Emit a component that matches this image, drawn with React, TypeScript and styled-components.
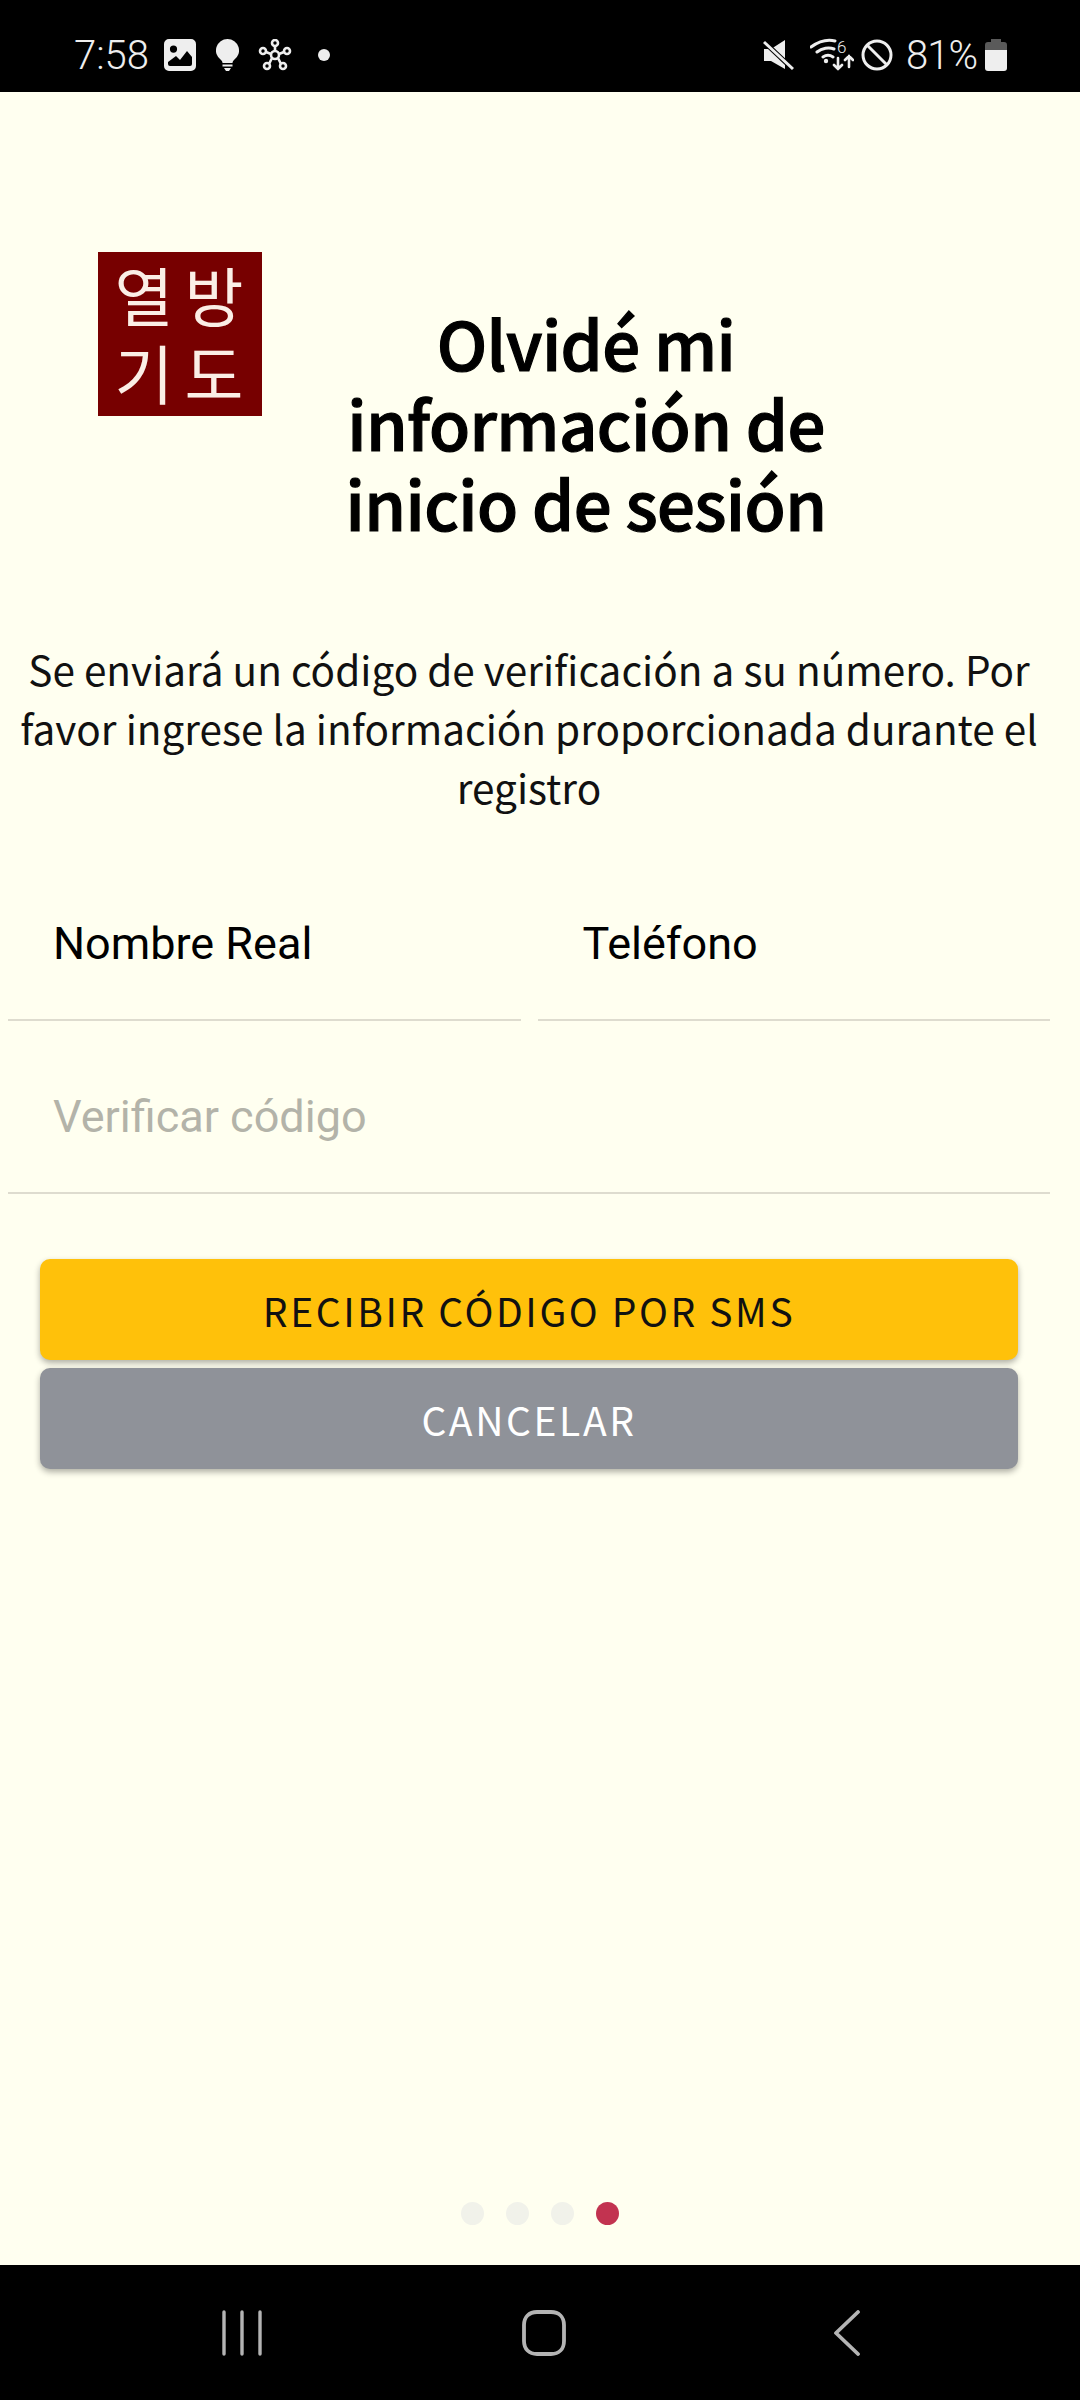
import React from "react";
import styled, { createGlobalStyle } from "styled-components";

const Global = createGlobalStyle`
  html, body {
    margin: 0;
    padding: 0;
    background: #fffff0;
  }
  * {
    box-sizing: border-box;
  }
`;

const CJK = `"Noto Sans CJK KR", "Noto Sans", sans-serif`;

const Root = styled.div`
  width: 1080px;
  height: 2400px;
  display: flex;
  flex-direction: column;
  background: #fffff0;
`;

const StatusBar = styled.div`
  height: 92px;
  flex: none;
  background: #000;
  color: #eee;
  padding: 18px 73px 0 74px;
  display: flex;
  align-items: center;
  justify-content: space-between;
  font-family: Roboto, sans-serif;
  font-weight: 300;
  font-size: 40px;
`;

const StatusGroup = styled.div`
  display: flex;
  align-items: center;
`;

const Time = styled.span`
  margin-right: 15px;
`;

const Percent = styled.span`
  margin: 0 8px 0 13px;
  letter-spacing: -1px;
`;

const Main = styled.main`
  flex: 1;
  display: flex;
  flex-direction: column;
  min-height: 0;
`;

const Header = styled.div`
  display: flex;
  align-items: flex-start;
  padding: 160px 0 0 98px;
  height: 547px;
`;

const Logo = styled.div`
  width: 164px;
  height: 164px;
  flex: none;
  background: #770000;
  color: #fbeee6;
  display: grid;
  grid-template-columns: 70px 70px;
  grid-auto-rows: 78px;
  align-items: center;
  justify-items: center;
  padding: 2px 13px 6px 11px;
  font-family: "Noto Sans CJK KR", serif;
  font-size: 64px;
`;

const LogoChar = styled.span`
  display: block;
  line-height: 78px;
  height: 78px;
`;

const Title = styled.h1`
  margin: 0 0 0 44px;
  width: 560px;
  padding-top: 50px;
  text-align: center;
  font-family: ${CJK};
  font-weight: 500;
  font-size: 67px;
  line-height: 80px;
  letter-spacing: -0.6px;
  -webkit-text-stroke: 1.2px #000;
  color: #000;
`;

const Intro = styled.p`
  margin: 0;
  padding: 0 22px 0 0;
  height: 209px;
  text-align: center;
  font-family: ${CJK};
  font-size: 40.5px;
  line-height: 59px;
  color: #111;
`;

const FieldRow = styled.div`
  display: flex;
  gap: 17px;
  padding: 0 30px 0 8px;
`;

const Field = styled.div`
  flex: 1;
  height: 173px;
  display: flex;
  align-items: center;
  padding: 20px 45px 0;
  border-bottom: 2px solid #dedccf;
  font-family: Roboto, sans-serif;
  font-size: 45px;
`;

const FieldInput = styled.div<{ $placeholder?: boolean }>`
  color: ${(p) => (p.$placeholder ? "#b3b3a9" : "#000")};
`;

const Actions = styled.div`
  display: flex;
  flex-direction: column;
  gap: 8px;
  padding: 65px 62px 0 40px;
`;

const ActionButton = styled.div<{ $bg: string; $fg: string }>`
  height: 101px;
  border-radius: 10px;
  background: ${(p) => p.$bg};
  color: ${(p) => p.$fg};
  display: flex;
  align-items: center;
  justify-content: center;
  font-family: ${CJK};
  font-size: 39px;
  letter-spacing: 2.6px;
  box-shadow: 0 3px 6px rgba(0, 0, 0, 0.32);
`;

const Pager = styled.div`
  margin-top: auto;
  display: flex;
  justify-content: center;
  gap: 22px;
  padding-bottom: 40px;
`;

const Dot = styled.div<{ $active?: boolean }>`
  width: 23px;
  height: 23px;
  border-radius: 50%;
  background: ${(p) => (p.$active ? "#c23350" : "#f1f2ea")};
`;

const NavBar = styled.div`
  height: 135px;
  flex: none;
  background: #000;
  display: flex;
  align-items: center;
  justify-content: space-between;
  padding: 0 219px 0 222px;
`;

const Icon = styled.svg<{ $left?: number; $right?: number }>`
  display: block;
  flex: none;
  margin-left: ${(p) => p.$left ?? 0}px;
  margin-right: ${(p) => p.$right ?? 0}px;
`;

const ImageIcon = () => (
  <Icon width="32" height="32" viewBox="0 0 32 32">
    <path
      fill="#eee"
      fillRule="evenodd"
      d="M5 0h22a5 5 0 0 1 5 5v22a5 5 0 0 1-5 5H5a5 5 0 0 1-5-5V5a5 5 0 0 1 5-5zM9.500 6.500a3.600 3.600 0 1 0 0 7.200 3.600 3.600 0 0 0 0-7.200zM4 23l8-6 4 4 7-9 5 6v7a2 2 0 0 1-2 2H6a2 2 0 0 1-2-2z"
    />
  </Icon>
);

const BulbIcon = () => (
  <Icon $left={20} width="23" height="32" viewBox="0 0 23 32">
    <path
      fill="#eee"
      d="M11.500 0a11.500 11.500 0 0 1 6.500 21c-1 .8-1.500 2-1.500 3h-10c0-1-.5-2.200-1.500-3a11.500 11.500 0 0 1 6.500-21zM6.500 25.500h10v2h-10zM8 29h7l-2 3h-3z"
    />
  </Icon>
);

const HubIcon = () => (
  <Icon $left={19} width="34" height="32" viewBox="0 0 34 32" fill="none" stroke="#eee" strokeWidth="2.600">
    <circle cx="17" cy="16" r="4" />
    <circle cx="17" cy="4" r="3" />
    <circle cx="5" cy="12" r="3" />
    <circle cx="29" cy="12" r="3" />
    <circle cx="9" cy="27" r="3" />
    <circle cx="25" cy="27" r="3" />
    <path d="M17 7v5M8 13l5 2M26 13l-5 2M11 25l3-6M23 25l-3-6" />
  </Icon>
);

const DotIcon = () => (
  <Icon $left={26} width="12" height="12" viewBox="0 0 12 12">
    <circle cx="6" cy="6" r="6" fill="#eee" />
  </Icon>
);

const MuteIcon = () => (
  <Icon width="32" height="32" viewBox="0 0 32 32">
    <path fill="#eee" d="M1 10h7L22 1v29L8 22H1z" />
    <path stroke="#000" strokeWidth="5" d="M-1 1l34 32" />
    <path stroke="#eee" strokeWidth="3" d="M1 3l29 27" />
  </Icon>
);

const WifiIcon = () => (
  <Icon $left={15} width="44" height="34" viewBox="0 0 44 34" fill="none" stroke="#eee" strokeWidth="3" strokeLinecap="round">
    <path d="M1 9C8 4 17 1 25 3M7 14c5-4 12-5 17-3M13 19c3-2 7-2 10 0" />
    <circle cx="16" cy="23" r="2.200" fill="#eee" stroke="none" />
    <text x="27" y="15" fill="#eee" stroke="none" fontFamily="Roboto, sans-serif" fontSize="17">
      6
    </text>
    <path strokeWidth="2.600" d="M28 20v11M24 27l4 4 4-4M39 29V18M35 22l4-4 4 4" />
  </Icon>
);

const BlockIcon = () => (
  <Icon $left={7} width="32" height="32" viewBox="0 0 32 32" fill="none" stroke="#eee" strokeWidth="3">
    <circle cx="16" cy="16" r="14" />
    <path d="M6 6l20 20" />
  </Icon>
);

const BatteryIcon = () => (
  <Icon width="22" height="32" viewBox="0 0 22 32">
    <path fill="#5a5a5a" d="M6 0h10v3h3a3 3 0 0 1 3 3v5H0V6a3 3 0 0 1 3-3h3z" />
    <path fill="#eee" d="M0 11h22v18a3 3 0 0 1-3 3H3a3 3 0 0 1-3-3z" />
  </Icon>
);

const RecentsIcon = () => (
  <Icon width="40" height="46" viewBox="0 0 40 46" stroke="#b4b4b4" strokeWidth="3.400" strokeLinecap="round">
    <path d="M2 2v42M20 2v42M38 2v42" />
  </Icon>
);

const HomeIcon = () => (
  <Icon $right={7} width="44" height="46" viewBox="0 0 44 46" fill="none" stroke="#b4b4b4" strokeWidth="3.800">
    <path d="M15 2h14c8 0 13 5 13 13v16c0 8-5 13-13 13H15C7 44 2 39 2 31V15C2 7 7 2 15 2z" />
  </Icon>
);

const BackIcon = () => (
  <Icon width="28" height="46" viewBox="0 0 28 46" fill="none" stroke="#b4b4b4" strokeWidth="3.800" strokeLinecap="round" strokeLinejoin="round">
    <path d="M25 2L3 23l22 21" />
  </Icon>
);

export default function App() {
  return (
    <Root>
      <Global />
      <StatusBar>
        <StatusGroup>
          <Time>7:58</Time>
          <ImageIcon />
          <BulbIcon />
          <HubIcon />
          <DotIcon />
        </StatusGroup>
        <StatusGroup>
          <MuteIcon />
          <WifiIcon />
          <BlockIcon />
          <Percent>81%</Percent>
          <BatteryIcon />
        </StatusGroup>
      </StatusBar>
      <Main>
        <Header>
          <Logo>
            <LogoChar>열</LogoChar>
            <LogoChar>방</LogoChar>
            <LogoChar>기</LogoChar>
            <LogoChar>도</LogoChar>
          </Logo>
          <Title>Olvidé mi información de inicio de sesión</Title>
        </Header>
        <Intro>
          Se enviará un código de verificación a su número. Por favor ingrese la información proporcionada durante el registro
        </Intro>
        <FieldRow>
          <Field>
            <FieldInput>Nombre Real</FieldInput>
          </Field>
          <Field>
            <FieldInput>Teléfono</FieldInput>
          </Field>
        </FieldRow>
        <FieldRow>
          <Field>
            <FieldInput $placeholder>Verificar código</FieldInput>
          </Field>
        </FieldRow>
        <Actions>
          <ActionButton $bg="#ffc10a" $fg="#111">RECIBIR CÓDIGO POR SMS</ActionButton>
          <ActionButton $bg="#8f9299" $fg="#fff">CANCELAR</ActionButton>
        </Actions>
        <Pager>
          <Dot />
          <Dot />
          <Dot />
          <Dot $active />
        </Pager>
      </Main>
      <NavBar>
        <RecentsIcon />
        <HomeIcon />
        <BackIcon />
      </NavBar>
    </Root>
  );
}
